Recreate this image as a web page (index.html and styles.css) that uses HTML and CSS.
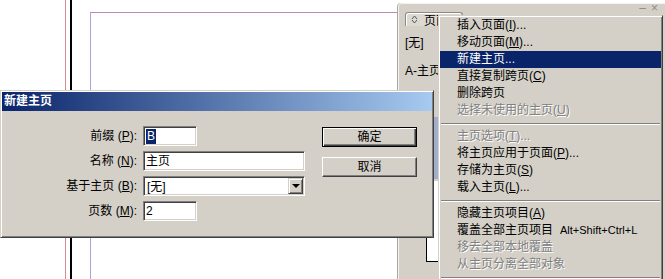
FILE: index.html
```html
<!DOCTYPE html>
<html lang="zh-CN">
<head>
  <meta charset="UTF-8">
  <title>新建主页</title>
  <link rel="stylesheet" href="styles.css">
</head>
<body>
<div class="desk">

  <!-- page guides on the canvas -->
  <div class="guide guide-red"></div>
  <div class="guide guide-black"></div>
  <div class="page-edge"></div>

  <!-- Pages panel -->
  <div class="panel">
    <div class="panel-bar"><span class="panel-ctl">&ndash;</span><span class="panel-ctl">&times;</span></div>
    <div class="panel-tab">
      <svg class="tab-icon" width="7" height="9" viewBox="0 0 7 9">
        <path d="M1 4 L3.5 1 L6 4 M1 5 L3.5 8 L6 5" fill="none" stroke="#555" stroke-width="1"/>
      </svg>
      <span>页面</span>
    </div>
    <div class="panel-list">
      <div class="panel-row">[无]</div>
      <div class="panel-row">A-主页</div>
    </div>
    <div class="thumb thumb-sel"></div>
    <div class="thumb"></div>
  </div>

  <!-- New master dialog -->
  <div class="dialog">
    <div class="dialog-title">新建主页</div>
    <div class="dialog-body">
      <div class="form">
        <label class="label">前缀 (<u>P</u>):</label>
        <div class="field short"><span class="sel">B</span></div>
        <label class="label">名称 (<u>N</u>):</label>
        <div class="field">主页</div>
        <label class="label">基于主页 (<u>B</u>):</label>
        <div class="field select">
          <span>[无]</span>
          <span class="drop"><span class="arrow"></span></span>
        </div>
        <label class="label">页数 (<u>M</u>):</label>
        <div class="field short">2</div>
      </div>
      <div class="buttons">
        <div class="btn default">确定</div>
        <div class="btn">取消</div>
      </div>
    </div>
  </div>

  <!-- Panel menu -->
  <div class="menu">
    <div class="item">插入页面(<u>I</u>)...</div>
    <div class="item">移动页面(<u>M</u>)...</div>
    <div class="item on">新建主页...</div>
    <div class="item">直接复制跨页(<u>C</u>)</div>
    <div class="item">删除跨页</div>
    <div class="item off">选择未使用的主页(<u>U</u>)</div>
    <div class="sep"></div>
    <div class="item off">主页选项(<u>T</u>)...</div>
    <div class="item">将主页应用于页面(<u>P</u>)...</div>
    <div class="item">存储为主页(<u>S</u>)</div>
    <div class="item">载入主页(<u>L</u>)...</div>
    <div class="sep"></div>
    <div class="item">隐藏主页项目(<u>A</u>)</div>
    <div class="item">覆盖全部主页项目<span class="key">Alt+Shift+Ctrl+L</span></div>
    <div class="item off">移去全部本地覆盖</div>
    <div class="item off">从主页分离全部对象</div>
    <div class="sep"></div>
  </div>

</div>
</body>
</html>
```

FILE: styles.css
```css
* {
  box-sizing: border-box;
}
body {
  margin: 0;
  background-color: #fff;
  color: #000;
  font-family: "Liberation Sans", "Noto Sans CJK SC", sans-serif;
  font-size: 12px;
  overflow: hidden;
}
.desk {
  position: relative;
  width: 665px;
  height: 279px;
  overflow: hidden;
}
u {
  text-underline-offset: 1px;
}

/* canvas guides */
.guide {
  position: absolute;
  top: 0;
  height: 279px;
}
.guide-red {
  left: 65px;
  width: 1px;
  background-color: #d68c8c;
}
.guide-black {
  left: 70px;
  width: 2px;
  background-color: #000;
}
.page-edge {
  position: absolute;
  left: 90px;
  top: 12px;
  width: 330px;
  height: 300px;
  border-top: 1px solid #c08aac;
  border-left: 1px solid #a9a3da;
}

/* pages panel */
.panel {
  position: absolute;
  left: 398px;
  top: 3px;
  width: 267px;
  height: 290px;
  background-color: #d4d0c8;
  border-top: 1px solid #f4f2ee;
  border-left: 1px solid #f4f2ee;
  border-radius: 4px 0 0 0;
  box-shadow: -1px 0 0 #aaa79f;
}
.panel-bar {
  height: 8px;
  display: flex;
  justify-content: flex-end;
  gap: 5px;
  padding-right: 7px;
  line-height: 8px;
  color: #8e8c88;
  font-size: 12px;
}
.panel-tab {
  display: flex;
  align-items: center;
  gap: 6px;
  width: 58px;
  height: 14px;
  margin-left: 6px;
  padding-left: 5px;
  background-color: #dcd9d2;
  border: 1px solid #8c8a85;
  border-bottom: none;
  border-radius: 3px 3px 0 0;
  box-shadow: inset 1px 1px 0 #fff;
}
.panel-list {
  display: flex;
  flex-direction: column;
  gap: 14px;
  padding: 10px 0 0 6px;
}
.panel-row {
  height: 14px;
  line-height: 14px;
}
.thumb {
  position: absolute;
  left: 27px;
  top: 177px;
  width: 40px;
  height: 81px;
  background-color: #fff;
  border-left: 1px solid #000;
  border-bottom: 1px solid #000;
}
.thumb-sel {
  top: 113px;
  height: 62px;
  background-color: #a3aec8;
  border: none;
}

/* dialog */
.dialog {
  position: absolute;
  left: 0;
  top: 90px;
  width: 434px;
  height: 148px;
  padding: 1px;
  background-color: #d4d0c8;
  border: 1px solid;
  border-color: #d4d0c8 #404040 #404040 #d4d0c8;
  box-shadow: inset 1px 1px 0 #fff, inset -1px -1px 0 #808080;
}
.dialog-title {
  height: 19px;
  line-height: 19px;
  padding-left: 2px;
  background: linear-gradient(to right, #0a246a, #a6caf0);
  color: #fff;
  font-weight: bold;
  font-size: 12px;
}
.dialog-body {
  display: flex;
  padding-top: 15px;
}
.form {
  display: grid;
  grid-template-columns: 135px 162px;
  grid-auto-rows: 20px;
  column-gap: 6px;
  row-gap: 5px;
}
.label {
  text-align: right;
  line-height: 20px;
}
.field {
  height: 20px;
  padding: 0 2px;
  line-height: 18px;
  background-color: #fff;
  border: 1px solid;
  border-color: #808080 #fff #fff #808080;
  box-shadow: inset 1px 1px 0 #404040, inset -1px -1px 0 #d4d0c8;
}
.field.short {
  width: 54px;
}
.sel {
  display: inline-block;
  padding: 0 1px;
  line-height: 15px;
  background-color: #0a246a;
  color: #fff;
}
.field.select {
  display: flex;
  justify-content: space-between;
  padding: 1px 1px 1px 3px;
}
.drop {
  display: flex;
  align-items: center;
  justify-content: center;
  width: 15px;
  height: 16px;
  background-color: #d4d0c8;
  border: 1px solid;
  border-color: #d4d0c8 #404040 #404040 #d4d0c8;
  box-shadow: inset 1px 1px 0 #fff, inset -1px -1px 0 #808080;
}
.arrow {
  width: 0;
  height: 0;
  border-left: 4px solid transparent;
  border-right: 4px solid transparent;
  border-top: 4px solid #000;
}
.buttons {
  display: flex;
  flex-direction: column;
  gap: 10px;
  margin-left: 17px;
  padding-top: 1px;
}
.btn {
  width: 95px;
  height: 20px;
  line-height: 18px;
  text-align: center;
  border: 1px solid;
  border-color: #fff #404040 #404040 #fff;
  box-shadow: inset -1px -1px 0 #808080;
}
.btn.default {
  border-color: #000;
  box-shadow: inset 1px 1px 0 #fff, inset -1px -1px 0 #404040, inset -2px -2px 0 #808080;
}

/* panel menu */
.menu {
  position: absolute;
  left: 438px;
  top: 15px;
  width: 225px;
  height: 290px;
  padding: 1px;
  background-color: #d4d0c8;
  border: 1px solid;
  border-color: #d4d0c8 #404040 #404040 #d4d0c8;
  box-shadow: inset 1px 1px 0 #fff, inset -1px -1px 0 #808080;
}
.item {
  display: flex;
  height: 17px;
  line-height: 17px;
  padding-left: 17px;
  white-space: nowrap;
}
.item.on {
  background-color: #0a246a;
  color: #fff;
}
.item.off {
  color: #808080;
  text-shadow: 1px 1px 0 #fff;
}
.key {
  margin-left: 7px;
  font-size: 11px;
}
.sep {
  height: 9px;
  padding: 4px 1px 0;
}
.sep::before {
  content: "";
  display: block;
  border-top: 1px solid #808080;
  border-bottom: 1px solid #fff;
}
```
